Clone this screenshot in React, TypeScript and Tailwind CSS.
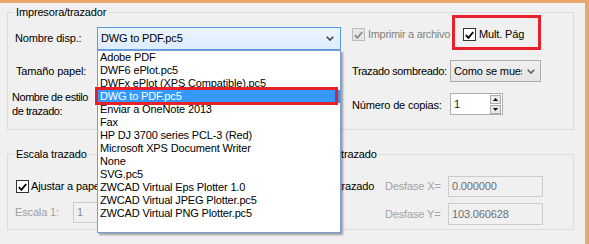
import React from 'react';

const plotters = [
  'Adobe PDF',
  'DWF6 ePlot.pc5',
  'DWFx ePlot (XPS Compatible).pc5',
  'DWG to PDF.pc5',
  'Enviar a OneNote 2013',
  'Fax',
  'HP DJ 3700 series PCL-3 (Red)',
  'Microsoft XPS Document Writer',
  'None',
  'SVG.pc5',
  'ZWCAD Virtual Eps Plotter 1.0',
  'ZWCAD Virtual JPEG Plotter.pc5',
  'ZWCAD Virtual PNG Plotter.pc5',
];

const CheckBox: React.FC<{ checked?: boolean; disabled?: boolean }> = ({ checked, disabled }) => (
  <span
    className={`flex h-[13px] w-[13px] shrink-0 items-center justify-center border ${
      disabled ? 'border-[#bcbcbc] bg-[#e6e6e6]' : 'border-[#333333] bg-white'
    }`}
  >
    {checked && (
      <svg width="9" height="8" viewBox="0 0 9 8">
        <path d="M0.8 4.2 L3.4 6.8 L8.2 1" fill="none" stroke={disabled ? '#8a8a8a' : '#000'} strokeWidth="1.9" />
      </svg>
    )}
  </span>
);

const Chevron: React.FC<{ color?: string }> = ({ color = '#404040' }) => (
  <svg width="8" height="5" viewBox="0 0 8 5" className="shrink-0">
    <path d="M0.7 0.7 L4 4 L7.3 0.7" fill="none" stroke={color} strokeWidth="1.6" />
  </svg>
);

const GroupBox: React.FC<{ title: string; className?: string; children: React.ReactNode }> = ({
  title,
  className = '',
  children,
}) => (
  <fieldset className={`border border-[#dcdcdc] ${className}`}>
    <legend className="ml-[6px] px-[2px] leading-[14px]">{title}</legend>
    {children}
  </fieldset>
);

export default function App() {
  return (
    <div className="relative h-[244px] w-[589px] overflow-hidden border-t-[3px] border-r-[4px] border-[#e9a869] bg-[#f0f0f0] pl-[7px] pt-[2px] font-['Liberation_Sans',Arial,sans-serif] text-[11px] tracking-[-0.15px] text-black">
      {/* Impresora/trazador */}
      <GroupBox title="Impresora/trazador" className="w-[567px]">
        <div className="pt-[8px] pb-[14px]">
          {/* Row 1 */}
          <div className="flex h-[23px]">
            <span className="w-[89px] self-center pl-[7px]">Nombre disp.:</span>
            <div className="relative w-[244px]">
              <div className="flex h-[23px] items-center justify-between border border-[#569de5] bg-gradient-to-b from-[#ecf4fc] to-[#dcecfc] pl-[3px] pr-[6px]">
                <span>DWG to PDF.pc5</span>
                <Chevron />
              </div>
              {/* open list */}
              <div className="absolute left-0 top-[23px] z-10 h-[183px] w-[244px] border border-[#7a9ec9] bg-white shadow-[2px_2px_2px_rgba(0,0,0,0.35)]">
                {plotters.map((p, i) => (
                  <div
                    key={p}
                    className={`relative h-[13px] whitespace-nowrap pl-[2px] leading-[13px] ${
                      i === 3 ? 'bg-[#3399ff] text-white' : ''
                    }`}
                  >
                    {p}
                    {i === 3 && (
                      <span className="absolute -left-[3px] -top-[3px] -bottom-[2px] right-[2px] border-[3px] border-[#e8202a]" />
                    )}
                  </div>
                ))}
              </div>
            </div>
            <div className="ml-[11px] mt-[1px] flex h-[13px] items-center">
              <div className="flex w-[111px] items-center gap-[3px] whitespace-nowrap text-[#838383]">
                <CheckBox checked disabled />
                <span className="tracking-[-0.3px]">Imprimir a archivo</span>
              </div>
              <div className="relative flex items-center gap-[3px]">
                <CheckBox checked />
                <span>Mult. Pág</span>
                <span className="absolute -left-[11px] -top-[11px] h-[35px] w-[89px] border-[3px] border-[#e8202a]" />
              </div>
            </div>
          </div>

          {/* Row 2 */}
          <div className="mt-[10px] flex h-[22px] items-center">
            <span className="w-[344px] pl-[8px]">Tamaño papel:</span>
            <span className="w-[98px] whitespace-nowrap tracking-[-0.35px]">Trazado sombreado:</span>
            <div className="flex h-[22px] w-[91px] items-center justify-between border border-[#acacac] bg-gradient-to-b from-[#f0f0f0] to-[#e5e5e5] pl-[3px] pr-[5px]">
              <span className="w-[68px] overflow-hidden whitespace-nowrap">Como se muestra</span>
              <Chevron color="#606060" />
            </div>
          </div>

          {/* Row 3 */}
          <div className="mt-[11px] flex h-[22px] items-center">
            <span className="w-[344px] pl-[4px] leading-[14px] tracking-[-0.45px]">
              Nombre de estilo
              <br />
              de trazado:
            </span>
            <span className="w-[98px] whitespace-nowrap pt-[2px]">Número de copias:</span>
            <div className="flex h-[22px] w-[53px] border border-[#abadb3] bg-white">
              <span className="flex-1 pl-[3px] pt-[2px] text-[#1a1a2e]">1</span>
              <div className="mr-[1px] mt-[1px] flex flex-col gap-[1px]">
                <span className="flex h-[9px] w-[11px] items-center justify-center border border-[#acacac] bg-[#e8e8e8]">
                  <svg width="5" height="3" viewBox="0 0 5 3">
                    <path d="M0 3 L2.5 0 L5 3 Z" fill="#000" />
                  </svg>
                </span>
                <span className="flex h-[9px] w-[11px] items-center justify-center border border-[#acacac] bg-[#e8e8e8]">
                  <svg width="5" height="3" viewBox="0 0 5 3">
                    <path d="M0 0 L5 0 L2.5 3 Z" fill="#000" />
                  </svg>
                </span>
              </div>
            </div>
          </div>
        </div>
      </GroupBox>

      <div className="mt-[17px] flex gap-[6px]">
        {/* Escala trazado */}
        <GroupBox title="Escala trazado" className="w-[262px]">
          <div className="pt-[15px] pb-[5px]">
            <div className="flex h-[21px] items-center gap-[2px] pl-[8px]">
              <CheckBox checked />
              <span>Ajustar a papel</span>
            </div>
            <div className="mt-[5px] flex h-[21px] items-center">
              <span className="w-[65px] pl-[7px] text-[#a0a0a0]">Escala 1:</span>
              <div className="flex h-[21px] w-[80px] items-center border border-[#cccccc] bg-[#f0f0f0] pl-[3px] text-[#8a8a8a]">
                1
              </div>
            </div>
          </div>
        </GroupBox>

        {/* Desfase de trazado */}
        <GroupBox title="Desfase de trazado" className="w-[299px]">
          <div className="pt-[15px] pb-[4px] pl-[9px]">
            <div className="flex h-[21px] items-center">
              <div className="flex w-[100px] items-center gap-[2px]">
                <CheckBox />
                <span>Centrar trazado</span>
              </div>
              <span className="w-[63px] text-[#a3a3a3]">Desfase X=</span>
              <div className="h-[21px] w-[95px] border border-[#cccccc] bg-[#f0f0f0] pl-[3px] pt-[1px] text-[#6d6d78]">
                0.000000
              </div>
            </div>
            <div className="mt-[6px] flex h-[22px] items-center">
              <span className="w-[100px]" />
              <span className="w-[63px] text-[#a3a3a3]">Desfase Y=</span>
              <div className="h-[22px] w-[95px] border border-[#cccccc] bg-[#f0f0f0] pl-[3px] pt-[2px] text-[#6d6d78]">
                103.060628
              </div>
            </div>
          </div>
        </GroupBox>
      </div>
    </div>
  );
}
